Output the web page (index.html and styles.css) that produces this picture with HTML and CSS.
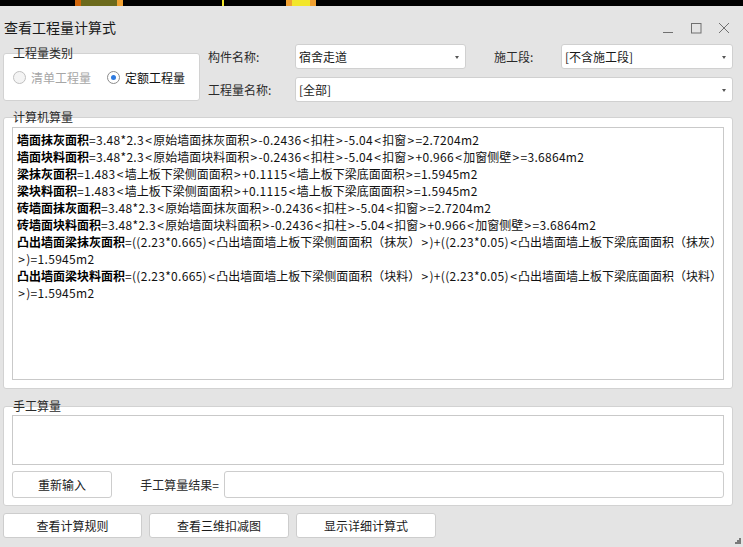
FILE: index.html
```html
<!DOCTYPE html>
<html lang="zh-CN">
<head>
<meta charset="utf-8">
<title>查看工程量计算式</title>
<link rel="stylesheet" href="styles.css">
</head>
<body>
<div class="strip">
  <span class="sp" style="width:75px"></span><span class="blk orange" style="width:6px"></span><span class="blk olive" style="width:36px"></span><span class="blk orange2" style="width:6px"></span>
  <span class="sp" style="width:99px"></span><span class="blk yellow" style="width:2px"></span>
  <span class="sp" style="width:62px"></span><span class="blk orange2" style="width:6px"></span><span class="blk yellow" style="width:18px"></span><span class="blk orange2" style="width:6px"></span>
</div>
<div class="window">
  <div class="titlebar">
    <div class="title">查看工程量计算式</div>
    <div class="controls">
      <svg class="ctl" width="12" height="12" viewBox="0 0 12 12"><path d="M1 10.5h10" stroke="#707070" stroke-width="1" fill="none"/></svg>
      <svg class="ctl" width="12" height="12" viewBox="0 0 12 12"><rect x="1.5" y="1.5" width="9.5" height="9.5" stroke="#707070" stroke-width="1" fill="none"/></svg>
      <svg class="ctl" width="12" height="12" viewBox="0 0 12 12"><path d="M1 1L11 11M11 1L1 11" stroke="#707070" stroke-width="1" fill="none"/></svg>
    </div>
  </div>

  <div class="top">
    <div class="group catbox">
      <span class="legend">工程量类别</span>
      <label class="radio disabled"><span class="dot"></span>清单工程量</label>
      <label class="radio"><span class="dot on"></span>定额工程量</label>
    </div>
    <div class="fields">
      <span class="flabel">构件名称:</span>
      <div class="combo c1">宿舍走道<span class="arrow"></span></div>
      <span></span>
      <span class="flabel">施工段:</span>
      <div class="combo">[不含施工段]<span class="arrow"></span></div>
      <span class="flabel">工程量名称:</span>
      <div class="combo wide">[全部]<span class="arrow"></span></div>
    </div>
  </div>

  <div class="group compbox">
    <span class="legend">计算机算量</span>
    <div class="textarea formulas">
      <div class="ln"><b>墙面抹灰面积</b><span class="l">=3.48*2.3<span class="k">&lt;</span></span>原始墙面抹灰面积<span class="l"><span class="k">&gt;</span>-0.2436<span class="k">&lt;</span></span>扣柱<span class="l"><span class="k">&gt;</span>-5.04<span class="k">&lt;</span></span>扣窗<span class="l"><span class="k">&gt;</span>=2.7204m2</span></div>
      <div class="ln"><b>墙面块料面积</b><span class="l">=3.48*2.3<span class="k">&lt;</span></span>原始墙面块料面积<span class="l"><span class="k">&gt;</span>-0.2436<span class="k">&lt;</span></span>扣柱<span class="l"><span class="k">&gt;</span>-5.04<span class="k">&lt;</span></span>扣窗<span class="l"><span class="k">&gt;</span>+0.966<span class="k">&lt;</span></span>加窗侧壁<span class="l"><span class="k">&gt;</span>=3.6864m2</span></div>
      <div class="ln"><b>梁抹灰面积</b><span class="l">=1.483<span class="k">&lt;</span></span>墙上板下梁侧面面积<span class="l"><span class="k">&gt;</span>+0.1115<span class="k">&lt;</span></span>墙上板下梁底面面积<span class="l"><span class="k">&gt;</span>=1.5945m2</span></div>
      <div class="ln"><b>梁块料面积</b><span class="l">=1.483<span class="k">&lt;</span></span>墙上板下梁侧面面积<span class="l"><span class="k">&gt;</span>+0.1115<span class="k">&lt;</span></span>墙上板下梁底面面积<span class="l"><span class="k">&gt;</span>=1.5945m2</span></div>
      <div class="ln"><b>砖墙面抹灰面积</b><span class="l">=3.48*2.3<span class="k">&lt;</span></span>原始墙面抹灰面积<span class="l"><span class="k">&gt;</span>-0.2436<span class="k">&lt;</span></span>扣柱<span class="l"><span class="k">&gt;</span>-5.04<span class="k">&lt;</span></span>扣窗<span class="l"><span class="k">&gt;</span>=2.7204m2</span></div>
      <div class="ln"><b>砖墙面块料面积</b><span class="l">=3.48*2.3<span class="k">&lt;</span></span>原始墙面块料面积<span class="l"><span class="k">&gt;</span>-0.2436<span class="k">&lt;</span></span>扣柱<span class="l"><span class="k">&gt;</span>-5.04<span class="k">&lt;</span></span>扣窗<span class="l"><span class="k">&gt;</span>+0.966<span class="k">&lt;</span></span>加窗侧壁<span class="l"><span class="k">&gt;</span>=3.6864m2</span></div>
      <div class="ln"><b>凸出墙面梁抹灰面积</b><span class="l">=((2.23*0.665)<span class="k">&lt;</span></span>凸出墙面墙上板下梁侧面面积（抹灰）<span class="l"><span class="k">&gt;</span>)+((2.23*0.05)<span class="k">&lt;</span></span>凸出墙面墙上板下梁底面面积（抹灰）</div>
      <div class="ln"><span class="l"><span class="k">&gt;</span>)=1.5945m2</span></div>
      <div class="ln"><b>凸出墙面梁块料面积</b><span class="l">=((2.23*0.665)<span class="k">&lt;</span></span>凸出墙面墙上板下梁侧面面积（块料）<span class="l"><span class="k">&gt;</span>)+((2.23*0.05)<span class="k">&lt;</span></span>凸出墙面墙上板下梁底面面积（块料）</div>
      <div class="ln"><span class="l"><span class="k">&gt;</span>)=1.5945m2</span></div>
    </div>
  </div>

  <div class="group manbox">
    <span class="legend">手工算量</span>
    <div class="textarea manual"></div>
    <div class="manrow">
      <div class="btn reinput">重新输入</div>
      <span class="reslabel">手工算量结果=</span>
      <div class="input"></div>
    </div>
  </div>

  <div class="bottom">
    <div class="btn b1">查看计算规则</div>
    <div class="btn b2">查看三维扣减图</div>
    <div class="btn b2">显示详细计算式</div>
  </div>

  <svg class="grip" width="6" height="6" viewBox="0 0 6 6">
    <rect x="4" y="0" width="2" height="2" fill="#7a7a7a"/>
    <rect x="2" y="2" width="2" height="2" fill="#7a7a7a"/>
    <rect x="4" y="2" width="2" height="2" fill="#7a7a7a"/>
    <rect x="0" y="4" width="2" height="2" fill="#7a7a7a"/>
    <rect x="2" y="4" width="2" height="2" fill="#7a7a7a"/>
    <rect x="4" y="4" width="2" height="2" fill="#7a7a7a"/>
  </svg>
</div>
</body>
</html>
```

FILE: styles.css
```css
* { box-sizing: border-box; }
html, body { margin: 0; padding: 0; }
body {
  width: 743px;
  height: 547px;
  overflow: hidden;
  background: #e4e4e4;
  font-family: "Microsoft YaHei", "Noto Sans CJK SC", "Noto Sans", sans-serif;
  font-size: 12px;
  color: #1a1a1a;
}
.strip {
  height: 6px;
  background: #000;
  display: flex;
}
.strip .sp, .strip .blk { display: block; height: 6px; flex: none; }
.orange { background: #d0650a; }
.orange2 { background: #f0a030; }
.olive { background: #6c6a1c; }
.yellow { background: #f2e62a; }

.window {
  position: relative;
  height: 541px;
  padding: 0 10px 0 3px;
}
.titlebar {
  height: 34px;
  padding-top: 7px;
  display: flex;
  align-items: center;
  justify-content: space-between;
}
.title {
  font-size: 14px;
  line-height: 20px;
  padding-left: 1px;
  color: #1a1a1a;
}
.controls {
  display: flex;
  align-items: center;
  gap: 16px;
  margin-right: 3px;
  margin-top: 2px;
}
.ctl { display: block; }

.top {
  display: flex;
  align-items: flex-start;
  height: 61px;
}
.group {
  position: relative;
  background: #fff;
  border: 1px solid #d2d2d2;
  border-radius: 3px;
}
.legend {
  position: absolute;
  left: 9px;
  top: -9px;
  font-size: 12px;
  line-height: 16px;
  color: #2a2a2a;
  white-space: nowrap;
}
.catbox {
  margin-top: 13px;
  width: 197px;
  height: 48px;
  display: flex;
  align-items: center;
  padding: 1px 0 0 9px;
}
.radio {
  display: flex;
  align-items: center;
  line-height: 16px;
  color: #111;
  white-space: nowrap;
  flex: none;
}
.radio.disabled { color: #a6a6a6; margin-right: 16px; }
.dot {
  width: 13px;
  height: 13px;
  border-radius: 50%;
  border: 1px solid #8c8c8c;
  background: #fff;
  margin-right: 5px;
  position: relative;
  flex: none;
}
.disabled .dot { border-color: #c0c0c0; background: #f4f4f4; }
.dot.on::after {
  content: "";
  position: absolute;
  left: 3px;
  top: 3px;
  width: 5px;
  height: 5px;
  border-radius: 50%;
  background: #2f7be0;
}

.fields {
  margin-left: 8px;
  margin-top: 4px;
  display: grid;
  grid-template-columns: 87px 171px 28px 67px 172px;
  grid-template-rows: 25px 25px;
  row-gap: 8px;
  align-items: center;
}
.flabel {
  color: #2a2a2a;
  line-height: 16px;
  white-space: nowrap;
}
.combo {
  position: relative;
  height: 25px;
  background: #fff;
  border: 1px solid #d0d0d0;
  border-radius: 3px;
  padding-left: 3px;
  line-height: 23px;
  color: #1a1a1a;
  white-space: nowrap;
}
.combo.wide { grid-column: 2 / 6; height: 25px; }
.arrow {
  position: absolute;
  right: 6px;
  top: 11px;
  width: 0;
  height: 0;
  border-left: 2.5px solid transparent;
  border-right: 2.5px solid transparent;
  border-top: 3px solid #555;
}

.compbox {
  margin-top: 16px;
  height: 272px;
  padding: 9px 8px 8px 8px;
}
.textarea {
  background: #fff;
  border: 1px solid #c9c9c9;
}
.formulas {
  height: 253px;
  padding: 3px 4px;
  overflow: hidden;
}
.ln {
  line-height: 17px;
  white-space: nowrap;
  color: #111;
}
.ln b { font-weight: bold; color: #000; }
.ln .l { letter-spacing: 0.3px; }
.ln .k { letter-spacing: 0; margin: 0 1.3px; }

.manbox {
  margin-top: 17px;
  height: 100px;
  padding: 8px 8px 7px 8px;
}
.manual { height: 50px; }
.manrow {
  display: flex;
  align-items: center;
  margin-top: 6px;
  height: 27px;
}
.btn {
  background: #fff;
  border: 1px solid #cdcdcd;
  border-radius: 3px;
  display: flex;
  align-items: center;
  justify-content: center;
  color: #1a1a1a;
  white-space: nowrap;
}
.reinput { width: 100px; height: 27px; }
.reslabel {
  width: 112px;
  text-align: right;
  padding-right: 5px;
  color: #2a2a2a;
  white-space: nowrap;
}
.input {
  flex: 1;
  height: 27px;
  background: #fff;
  border: 1px solid #cdcdcd;
  border-radius: 3px;
}

.bottom {
  margin-top: 7px;
  display: flex;
  gap: 7px;
}
.bottom .btn { height: 25px; }
.b1 { width: 139px; }
.b2 { width: 140px; }

.grip {
  position: absolute;
  right: 2px;
  bottom: 3px;
}
```
